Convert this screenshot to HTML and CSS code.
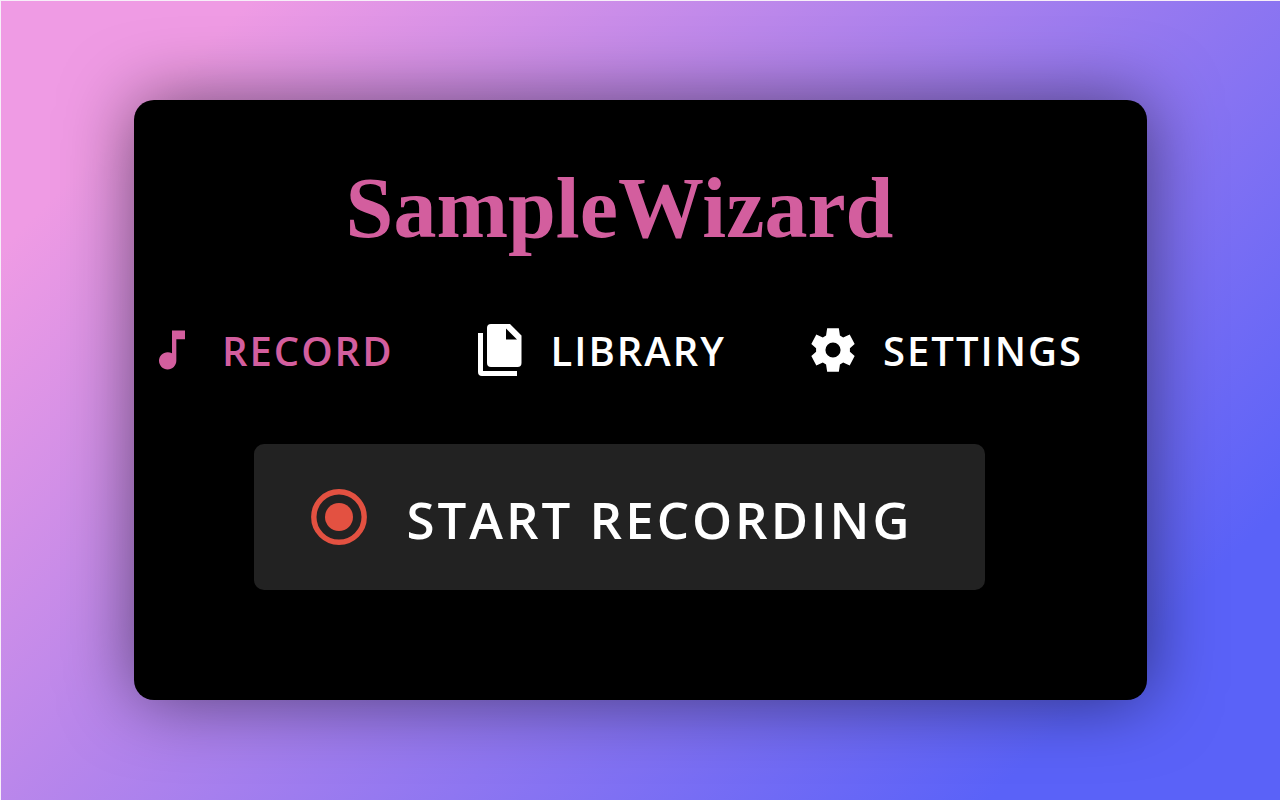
FILE: index.html
```html
<!DOCTYPE html>
<html lang="en">
<head>
<meta charset="utf-8">
<title>SampleWizard</title>
<link rel="stylesheet" href="styles.css">
</head>
<body>
<main class="card">
  <h1 class="logo">SampleWizard</h1>
  <nav class="tabs">
    <a class="tab tab-active" href="#record">
      <svg class="tab-icon" viewBox="0 0 24 24" aria-hidden="true"><path d="M12 3v10.550c-.59-.34-1.270-.55-2-.55-2.210 0-4 1.790-4 4s1.790 4 4 4 4-1.790 4-4V7h4V3z"/></svg>
      <span class="tab-label">Record</span>
    </a>
    <a class="tab" href="#library">
      <svg class="tab-icon" viewBox="0 0 52 52" aria-hidden="true"><path d="M17 0H36L47.500 11.500V39a4 4 0 0 1-4 4H17a4 4 0 0 1-4-4V4a4 4 0 0 1 4-4zM32 4.500V15.500H43z"/><path d="M4 9H9V47H43V52H8a4 4 0 0 1-4-4z"/></svg>
      <span class="tab-label">Library</span>
    </a>
    <a class="tab" href="#settings">
      <svg class="tab-icon" viewBox="0 0 24 24" aria-hidden="true"><path fill-rule="evenodd" d="M9.300 2h5.400l.5 3.300 1.500.9 3-1.300 2.300 4.300-2.200 2v1.600l2.200 2-2.300 4.300-3-1.300-1.500.9-.5 3.300H9.300l-.5-3.300-1.500-.9-3 1.300L2 14.800l2.200-2v-1.600L2 9.200l2.300-4.300 3 1.300 1.500-.9zM12 8.500a3.500 3.500 0 1 0 0 7 3.500 3.500 0 0 0 0-7z"/></svg>
      <span class="tab-label">Settings</span>
    </a>
  </nav>
  <button class="record" type="button">
    <svg class="record-icon" viewBox="0 0 66 66" aria-hidden="true"><circle cx="33" cy="33" r="25.200" fill="none" stroke="currentColor" stroke-width="5.400"/><circle cx="33" cy="33" r="14"/></svg>
    <span class="record-label">Start recording</span>
  </button>
</main>
</body>
</html>
```
FILE: styles.css
```css
* {
  box-sizing: border-box;
}

body {
  margin: 0;
  min-height: 100vh;
  padding: 99px 133px 100px;
  display: flex;
  border: solid #f7eef8;
  border-width: 1px 0 0 1px;
  background: linear-gradient(135deg, #ef9be4 12%, #5a62f8 86%);
  font-family: "Open Sans", "Noto Sans", sans-serif;
}

.card {
  flex: 1;
  display: flex;
  flex-direction: column;
  align-items: center;
  padding: 48px 42px 40px 0;
  border-radius: 20px;
  background: #000;
  box-shadow: 0 0 70px rgba(0, 0, 0, 0.5);
}

.logo {
  margin: 0;
  color: #d35e9e;
  font-family: "Liberation Serif", serif;
  font-size: 86px;
  font-weight: 700;
  line-height: 120px;
}

.tabs {
  display: flex;
  justify-content: center;
  gap: 81px;
  margin-top: 52px;
  padding-right: 10px;
}

.tab {
  display: flex;
  align-items: center;
  gap: 24px;
  color: #fff;
  font-size: 40px;
  font-weight: 600;
  line-height: 58px;
  letter-spacing: 2px;
  text-decoration: none;
  text-transform: uppercase;
  white-space: nowrap;
}

.tab-active {
  color: #d35e9e;
}

.tab-icon {
  flex: none;
  width: 52px;
  height: 52px;
  fill: currentColor;
}

.tab-label {
  padding-top: 2px;
}

.record {
  display: flex;
  align-items: center;
  gap: 34px;
  margin-top: 64px;
  padding: 38px 72px 38px 52px;
  border: 0;
  border-radius: 10px;
  background: #222;
  color: #fff;
  font: 600 51px/66px "Open Sans", "Noto Sans", sans-serif;
  letter-spacing: 3px;
  text-transform: uppercase;
  white-space: nowrap;
}

.record-icon {
  width: 66px;
  height: 66px;
  color: #e35141;
  fill: currentColor;
}

.record-label {
  padding-top: 4px;
}
```
